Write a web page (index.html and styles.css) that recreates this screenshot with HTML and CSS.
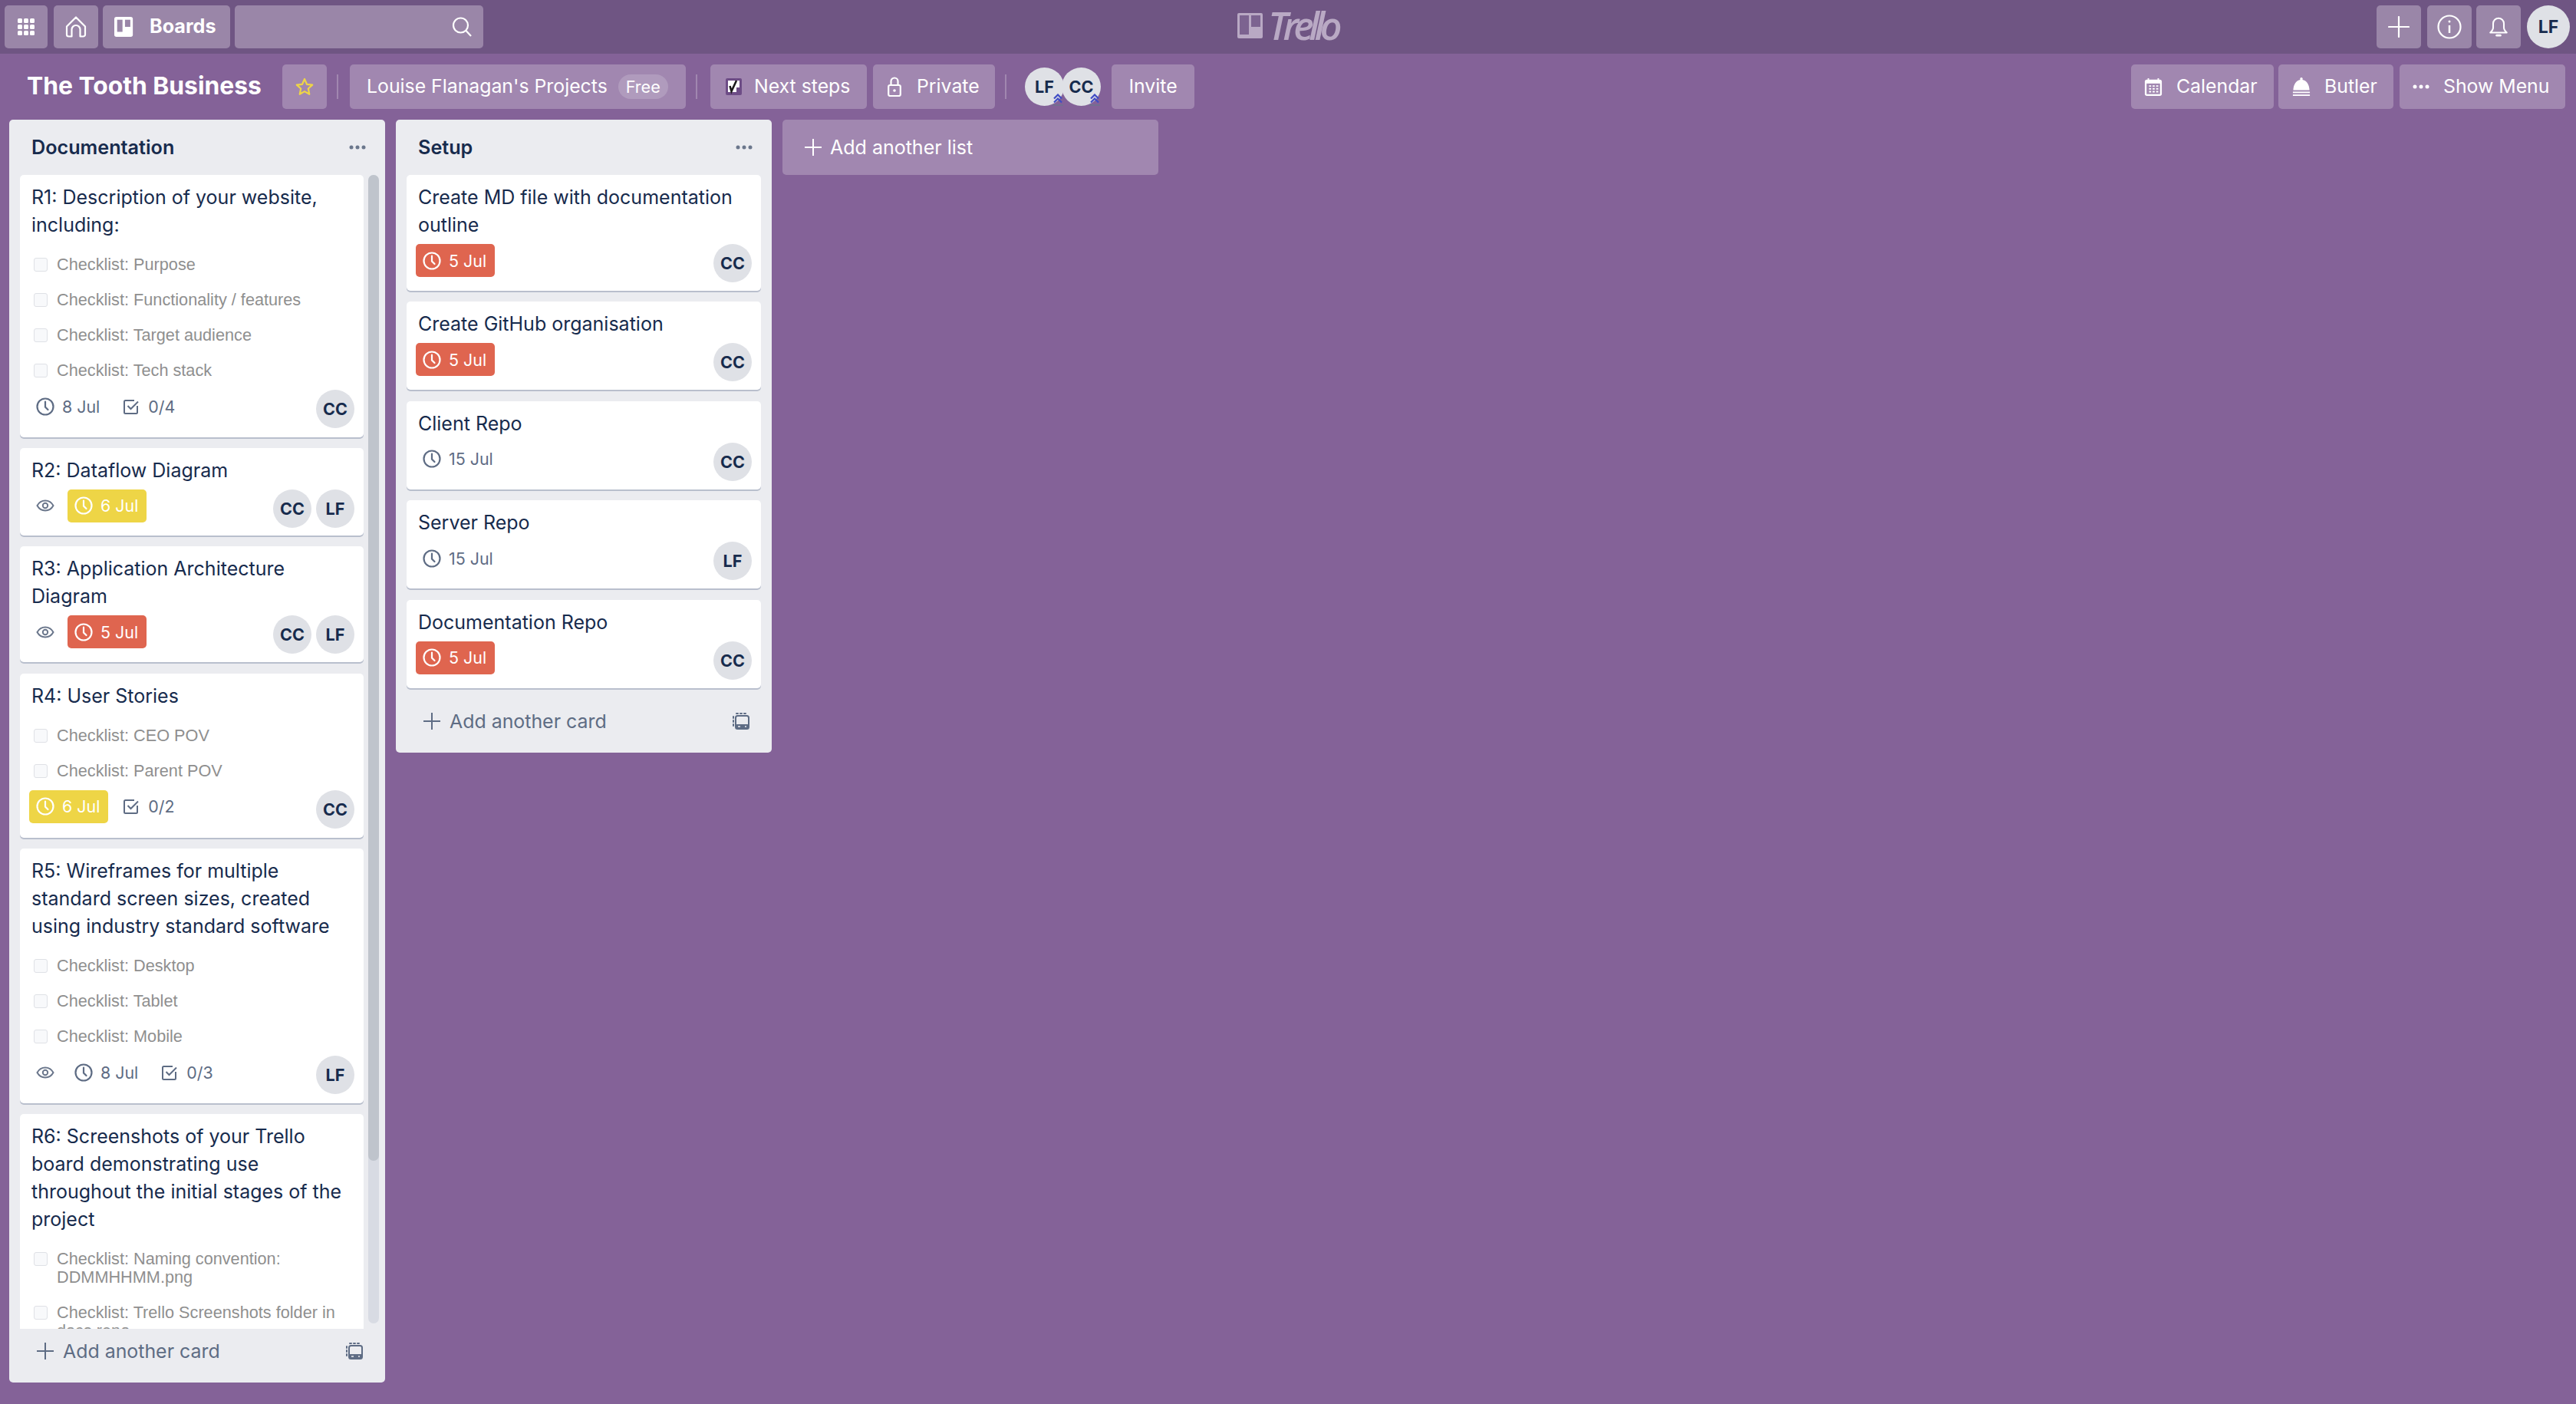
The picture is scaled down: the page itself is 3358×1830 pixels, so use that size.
FILE: index.html
```html
<!DOCTYPE html>
<html lang="en">
<head>
    <meta charset="UTF-8">
    <title>The Tooth Business | Trello</title>
    <link rel="stylesheet" href="styles.css">
</head>
<body>
    <svg class="sprite" width="0" height="0">
        <symbol id="clock" viewBox="0 0 24 24"><circle cx="12" cy="12" r="10.5" fill="none" stroke="currentColor" stroke-width="2.2"/><path d="M12 5.5V12.5L15.5 16" fill="none" stroke="currentColor" stroke-width="2.2" stroke-linecap="round"/></symbol>
        <symbol id="eye" viewBox="0 0 24 24"><path d="M1.5 12C4 7.5 7.5 5.5 12 5.5S20 7.5 22.5 12C20 16.500 16.500 18.500 12 18.500S4 16.500 1.500 12Z" fill="none" stroke="currentColor" stroke-width="2"/><circle cx="12" cy="12" r="3.200" fill="none" stroke="currentColor" stroke-width="2"/></symbol>
        <symbol id="check" viewBox="0 0 20 20"><path d="M18 9V17.500A1.500 1.500 0 0 1 16.500 19H2.500A1.500 1.500 0 0 1 1 17.500V3.500A1.500 1.500 0 0 1 2.500 2H14" fill="none" stroke="currentColor" stroke-width="2"/><path d="M5.500 9L9.500 13L19 3.500" fill="none" stroke="currentColor" stroke-width="2"/></symbol>
        <symbol id="plus" viewBox="0 0 22 22"><path d="M11 0V22M0 11H22" stroke="currentColor" stroke-width="2"/></symbol>
        <symbol id="template" viewBox="0 0 22 22"><path d="M1 5V7M1 10V12M1 15V17M5 1H7M10 1H12M15 1H17" stroke="currentColor" stroke-width="2" stroke-linecap="round"/><rect x="4" y="4" width="17" height="17" rx="2.500" fill="none" stroke="currentColor" stroke-width="2"/><rect x="4" y="15" width="17" height="6" rx="1.500" fill="currentColor"/><path d="M7 18H10M16 18H18" stroke="#ebecf0" stroke-width="1.600"/></symbol>
        <symbol id="chevrons" viewBox="0 0 16 16"><path d="M3 6.500L8 1.500L13 6.500M3 11.500L8 6.500L13 11.500" fill="none" stroke="#3f4bc4" stroke-width="2.200"/><path d="M1 15H15" stroke="#6f748f" stroke-width="1.600"/></symbol>
    </svg>

    <header class="topbar">
        <div class="topbar-left">
            <button class="nav-btn nav-grid">
                <svg class="icon-24" viewBox="0 0 24 24" fill="#fff"><rect x="1" y="1" width="6" height="6" rx="1.500"/><rect x="9" y="1" width="6" height="6" rx="1.500"/><rect x="17" y="1" width="6" height="6" rx="1.500"/><rect x="1" y="9" width="6" height="6" rx="1.500"/><rect x="9" y="9" width="6" height="6" rx="1.500"/><rect x="17" y="9" width="6" height="6" rx="1.500"/><rect x="1" y="17" width="6" height="6" rx="1.500"/><rect x="9" y="17" width="6" height="6" rx="1.500"/><rect x="17" y="17" width="6" height="6" rx="1.500"/></svg>
            </button>
            <button class="nav-btn nav-square nav-home">
                <svg class="icon-28" viewBox="0 0 28 28" fill="none" stroke="#fff" stroke-width="2.200"><path d="M14 1.500L2 13.500V24A2.500 2.500 0 0 0 4.500 26.500H8.500V17.500A5.500 5.500 0 0 1 19.500 17.500V26.500H23.500A2.500 2.500 0 0 0 26 24V13.500Z" stroke-linejoin="round"/></svg>
            </button>
            <button class="nav-btn nav-boards">
                <svg class="icon-boards" viewBox="0 0 28 28"><rect width="26" height="28" rx="3" fill="#fff"/><rect x="4" y="4" width="7.500" height="17" fill="#9a86a8"/><rect x="15" y="4" width="7.500" height="10" fill="#9a86a8"/></svg>
                <span>Boards</span>
            </button>
            <div class="search-box">
                <svg class="icon-28" viewBox="0 0 28 28" fill="none" stroke="#fff" stroke-width="2.200"><circle cx="12.500" cy="12" r="9.500"/><path d="M19.500 19L26 26"/></svg>
            </div>
        </div>
        <div class="logo">
            <svg class="logo-mark" viewBox="0 0 33 33"><rect width="33" height="33" rx="2" fill="#b9a9c4"/><rect x="3" y="3" width="12" height="25" fill="#7c6390"/><rect x="18" y="3" width="12" height="15" fill="#7c6390"/></svg>
            <span class="logo-text">Trello</span>
        </div>
        <div class="topbar-right">
            <button class="nav-btn nav-square nav-plus">
                <svg class="icon-28" viewBox="0 0 28 28" stroke="#fff" stroke-width="2.200"><path d="M14 1V27M1 14H27" stroke-linecap="round"/></svg>
            </button>
            <button class="nav-btn nav-square">
                <svg class="icon-32" viewBox="0 0 32 32" fill="none" stroke="#fff" stroke-width="2.200"><ellipse cx="16" cy="16" rx="14.500" ry="14.500"/><path d="M16 14V24" stroke-width="2.500"/><circle cx="16" cy="9" r="1.500" fill="#fff" stroke="none"/></svg>
            </button>
            <button class="nav-btn nav-square">
                <svg class="icon-28" viewBox="0 0 28 30" fill="none" stroke="#fff" stroke-width="2.200"><path d="M14 3A7.500 7.500 0 0 0 6.500 10.500V16C6.500 19 4.500 21 2.500 23H25.500C23.500 21 21.500 19 21.500 16V10.500A7.500 7.500 0 0 0 14 3Z" stroke-linejoin="round"/><path d="M11.500 27H16.500" stroke-width="3" stroke-linecap="round"/></svg>
            </button>
            <div class="avatar avatar-top">LF</div>
        </div>
    </header>

    <div class="boardbar">
        <h1 class="board-name">The Tooth Business</h1>
        <button class="bar-btn bar-star">
            <svg class="icon-24" viewBox="0 0 24 24" fill="none" stroke="#eed546" stroke-width="2.200"><path d="M12 2L15 8.800L22.200 9.600L16.800 14.500L18.300 21.800L12 18.100L5.700 21.800L7.200 14.500L1.800 9.600L9 8.800Z" stroke-linejoin="round"/></svg>
        </button>
        <span class="bar-divider"></span>
        <button class="bar-btn bar-team">Louise Flanagan's Projects <span class="free-pill">Free</span></button>
        <span class="bar-divider"></span>
        <button class="bar-btn bar-steps">
            <svg class="icon-steps" viewBox="0 0 21 22"><rect width="21" height="22" rx="2" fill="#6d4c86"/><rect x="3" y="3" width="11" height="15" fill="#fff"/><rect x="14" y="3" width="4" height="9" fill="#fff"/><path d="M5.500 10L7.500 17L14 3" fill="none" stroke="#1b1b1b" stroke-width="2.600"/></svg>
            Next steps
        </button>
        <button class="bar-btn bar-private">
            <svg class="icon-lock" viewBox="0 0 18 26" fill="none" stroke="#fff" stroke-width="2.200"><rect x="1.200" y="11" width="15.600" height="14" rx="2"/><path d="M4.500 11V6A4.500 4.500 0 0 1 13.500 6V11"/><circle cx="9" cy="18" r="1.800" fill="#fff" stroke="none"/></svg>
            Private
        </button>
        <span class="bar-divider"></span>
        <div class="members">
            <div class="avatar avatar-bar">LF<svg class="admin-mark"><use href="#chevrons"/></svg></div>
            <div class="avatar avatar-bar avatar-overlap">CC<svg class="admin-mark"><use href="#chevrons"/></svg></div>
        </div>
        <button class="bar-btn bar-invite">Invite</button>

        <div class="bar-right">
            <button class="bar-btn bar-calendar">
                <svg class="icon-24" viewBox="0 0 24 26"><path d="M5 1V5M19 1V5" stroke="#fff" stroke-width="2"/><rect y="3" width="24" height="23" rx="3" fill="#fff"/><rect x="2.500" y="8.500" width="19" height="15" fill="#a187b0"/><path d="M6 12H9M11 12H14M16 12H19M6 16H9M11 16H14M16 16H19M6 20H9M11 20H14M16 20H19" stroke="#fff" stroke-width="2"/></svg>
                Calendar
            </button>
            <button class="bar-btn bar-butler">
                <svg class="icon-24" viewBox="0 0 24 26" fill="#fff"><path d="M12 0A2 2 0 0 1 13.500 3.200C19 4 23 9 23.500 18H.5C1 9 5 4 10.500 3.200A2 2 0 0 1 12 0Z"/><rect y="20" width="24" height="2"/><rect y="24" width="24" height="2"/></svg>
                Butler
            </button>
            <button class="bar-btn bar-menu">
                <svg class="icon-dots" viewBox="0 0 22 6" fill="#fff"><circle cx="3" cy="3" r="2.500"/><circle cx="11" cy="3" r="2.500"/><circle cx="19" cy="3" r="2.500"/></svg>
                Show Menu
            </button>
        </div>
    </div>

    <main class="board">
        <section class="list">
            <div class="list-head">
                <h2>Documentation</h2>
                <svg class="list-dots" viewBox="0 0 22 6"><circle cx="3" cy="3" r="2.500"/><circle cx="11" cy="3" r="2.500"/><circle cx="19" cy="3" r="2.500"/></svg>
            </div>
            <div class="list-scroll">
                <div class="cards cards-clipped">
                    <article class="card card-r1">
                        <p class="card-title">R1: Description of your website, including:</p>
                        <ul class="checklist">
                            <li><span class="box"></span>Checklist: Purpose</li>
                            <li><span class="box"></span>Checklist: Functionality / features</li>
                            <li><span class="box"></span>Checklist: Target audience</li>
                            <li><span class="box"></span>Checklist: Tech stack</li>
                        </ul>
                        <div class="card-foot">
                            <div class="badges">
                                <span class="badge"><svg class="icon-24"><use href="#clock"/></svg>8 Jul</span>
                                <span class="badge badge-check"><svg class="icon-20"><use href="#check"/></svg>0/4</span>
                            </div>
                            <div class="avatars"><div class="avatar">CC</div></div>
                        </div>
                    </article>
                    <article class="card card-tight">
                        <p class="card-title">R2: Dataflow Diagram</p>
                        <div class="card-foot">
                            <div class="badges">
                                <span class="badge badge-eye"><svg class="icon-24"><use href="#eye"/></svg></span>
                                <span class="badge badge-soon"><svg class="icon-24"><use href="#clock"/></svg>6 Jul</span>
                            </div>
                            <div class="avatars"><div class="avatar">CC</div><div class="avatar">LF</div></div>
                        </div>
                    </article>
                    <article class="card">
                        <p class="card-title">R3: Application Architecture Diagram</p>
                        <div class="card-foot">
                            <div class="badges">
                                <span class="badge badge-eye"><svg class="icon-24"><use href="#eye"/></svg></span>
                                <span class="badge badge-late"><svg class="icon-24"><use href="#clock"/></svg>5 Jul</span>
                            </div>
                            <div class="avatars"><div class="avatar">CC</div><div class="avatar">LF</div></div>
                        </div>
                    </article>
                    <article class="card">
                        <p class="card-title">R4: User Stories</p>
                        <ul class="checklist">
                            <li><span class="box"></span>Checklist: CEO POV</li>
                            <li><span class="box"></span>Checklist: Parent POV</li>
                        </ul>
                        <div class="card-foot">
                            <div class="badges">
                                <span class="badge badge-soon"><svg class="icon-24"><use href="#clock"/></svg>6 Jul</span>
                                <span class="badge badge-check"><svg class="icon-20"><use href="#check"/></svg>0/2</span>
                            </div>
                            <div class="avatars"><div class="avatar">CC</div></div>
                        </div>
                    </article>
                    <article class="card">
                        <p class="card-title">R5: Wireframes for multiple standard screen sizes, created using industry standard software</p>
                        <ul class="checklist">
                            <li><span class="box"></span>Checklist: Desktop</li>
                            <li><span class="box"></span>Checklist: Tablet</li>
                            <li><span class="box"></span>Checklist: Mobile</li>
                        </ul>
                        <div class="card-foot">
                            <div class="badges">
                                <span class="badge badge-eye"><svg class="icon-24"><use href="#eye"/></svg></span>
                                <span class="badge"><svg class="icon-24"><use href="#clock"/></svg>8 Jul</span>
                                <span class="badge badge-check"><svg class="icon-20"><use href="#check"/></svg>0/3</span>
                            </div>
                            <div class="avatars"><div class="avatar">LF</div></div>
                        </div>
                    </article>
                    <article class="card">
                        <p class="card-title">R6: Screenshots of your Trello board demonstrating use throughout the initial stages of the project</p>
                        <ul class="checklist">
                            <li><span class="box"></span>Checklist: Naming convention: DDMMHHMM.png</li>
                            <li><span class="box"></span>Checklist: Trello Screenshots folder in docs repo</li>
                        </ul>
                    </article>
                </div>
                <div class="scrollbar"><div class="scroll-thumb"></div></div>
            </div>
            <div class="list-foot">
                <svg class="icon-22"><use href="#plus"/></svg>
                <span class="add-card">Add another card</span>
                <svg class="icon-22 foot-template"><use href="#template"/></svg>
            </div>
        </section>

        <section class="list">
            <div class="list-head">
                <h2>Setup</h2>
                <svg class="list-dots" viewBox="0 0 22 6"><circle cx="3" cy="3" r="2.500"/><circle cx="11" cy="3" r="2.500"/><circle cx="19" cy="3" r="2.500"/></svg>
            </div>
            <div class="cards cards-full">
                <article class="card">
                    <p class="card-title">Create MD file with documentation outline</p>
                    <div class="card-foot">
                        <div class="badges"><span class="badge badge-late"><svg class="icon-24"><use href="#clock"/></svg>5 Jul</span></div>
                        <div class="avatars"><div class="avatar">CC</div></div>
                    </div>
                </article>
                <article class="card">
                    <p class="card-title">Create GitHub organisation</p>
                    <div class="card-foot">
                        <div class="badges"><span class="badge badge-late"><svg class="icon-24"><use href="#clock"/></svg>5 Jul</span></div>
                        <div class="avatars"><div class="avatar">CC</div></div>
                    </div>
                </article>
                <article class="card">
                    <p class="card-title">Client Repo</p>
                    <div class="card-foot">
                        <div class="badges"><span class="badge"><svg class="icon-24"><use href="#clock"/></svg>15 Jul</span></div>
                        <div class="avatars"><div class="avatar">CC</div></div>
                    </div>
                </article>
                <article class="card">
                    <p class="card-title">Server Repo</p>
                    <div class="card-foot">
                        <div class="badges"><span class="badge"><svg class="icon-24"><use href="#clock"/></svg>15 Jul</span></div>
                        <div class="avatars"><div class="avatar">LF</div></div>
                    </div>
                </article>
                <article class="card">
                    <p class="card-title">Documentation Repo</p>
                    <div class="card-foot">
                        <div class="badges"><span class="badge badge-late"><svg class="icon-24"><use href="#clock"/></svg>5 Jul</span></div>
                        <div class="avatars"><div class="avatar">CC</div></div>
                    </div>
                </article>
            </div>
            <div class="list-foot">
                <svg class="icon-22"><use href="#plus"/></svg>
                <span class="add-card">Add another card</span>
                <svg class="icon-22 foot-template"><use href="#template"/></svg>
            </div>
        </section>

        <button class="add-list">
            <svg class="icon-22"><use href="#plus"/></svg>
            Add another list
        </button>
    </main>
</body>
</html>
```

FILE: styles.css
```css
* {
    box-sizing: border-box;
}
html, body {
    height: 100%;
}
body {
    margin: 0;
    overflow: hidden;
    background-color: #846298;
    font-family: Inter, "Liberation Sans", sans-serif;
    color: #172b4d;
}
button {
    border: none;
    color: #fff;
    font-family: inherit;
    cursor: pointer;
}
svg {
    display: block;
    flex-shrink: 0;
}
.sprite {
    position: absolute;
}
.icon-20 { width: 20px; height: 20px; }
.icon-22 { width: 22px; height: 22px; }
.icon-24 { width: 24px; height: 24px; }
.icon-28 { width: 28px; height: 28px; }
.icon-32 { width: 32px; height: 32px; }

/* top bar */
.topbar {
    display: flex;
    align-items: center;
    height: 70px;
    padding: 0 8px 0 6px;
    background-color: #6f5583;
}
.topbar-left, .topbar-right {
    flex: 1;
    display: flex;
    align-items: center;
}
.topbar-right {
    justify-content: flex-end;
    gap: 6px;
}
.nav-btn {
    display: flex;
    align-items: center;
    justify-content: center;
    height: 56px;
    padding: 0;
    background-color: #9a86a8;
    border-radius: 5px;
}
.nav-grid {
    width: 56px;
}
.nav-square {
    width: 58px;
}
.nav-home {
    margin-left: 8px;
}
.nav-plus {
    margin-right: 2px;
}
.nav-boards {
    width: 166px;
    margin-left: 6px;
    gap: 20px;
    padding: 0 15px 2px;
    justify-content: flex-start;
    font-size: 25.2px;
    font-weight: 700;
}
.nav-boards svg {
    margin-top: 2px;
}
.icon-boards {
    width: 26px;
    height: 28px;
}
.search-box {
    display: flex;
    align-items: center;
    justify-content: flex-end;
    width: 324px;
    height: 56px;
    margin-left: 6px;
    padding-right: 14px;
    background-color: #9a86a8;
    border-radius: 5px;
}
.logo {
    display: flex;
    align-items: center;
    gap: 7px;
    margin-bottom: 4px;
}
.logo-mark {
    width: 33px;
    height: 33px;
}
.logo-text {
    font-family: "Open Sans", sans-serif;
    font-size: 50px;
    font-style: italic;
    font-weight: 600;
    line-height: 46px;
    letter-spacing: -6.5px;
    color: #b9a9c4;
}

/* avatars */
.avatar {
    position: relative;
    display: flex;
    align-items: center;
    justify-content: center;
    width: 50px;
    height: 50px;
    background-color: #dfe1e6;
    border-radius: 50%;
    font-size: 21.6px;
    font-weight: 700;
    color: #172b4d;
}
.avatar-top {
    width: 56px;
    height: 56px;
    margin-left: 2px;
    font-size: 23px;
}
.avatar-bar {
    width: 51px;
}
.avatar-overlap {
    margin-left: -3px;
}
.admin-mark {
    position: absolute;
    right: 0;
    bottom: 0;
    width: 16px;
    height: 16px;
}

/* board bar */
.boardbar {
    display: flex;
    align-items: center;
    height: 58px;
    margin-top: 14px;
    padding: 0 14px 0 35px;
}
.board-name {
    width: 333px;
    margin: 0;
    padding-bottom: 3px;
    font-size: 31.8px;
    font-weight: 700;
    color: #fff;
    white-space: nowrap;
}
.bar-btn {
    display: flex;
    align-items: center;
    height: 58px;
    padding: 0 0 3px;
    background-color: #a187b0;
    border-radius: 5px;
    font-size: 24.8px;
    white-space: nowrap;
}
.bar-btn svg {
    margin-top: 3px;
}
.bar-star {
    justify-content: center;
    width: 58px;
}
.bar-divider {
    width: 2px;
    height: 32px;
    margin: 0 15px 0 13px;
    background-color: #a187b0;
}
.bar-team {
    width: 438px;
    padding-left: 22px;
}
.free-pill {
    display: block;
    margin: 3px 0 0 14px;
    padding: 0 10px;
    height: 32px;
    line-height: 32px;
    background-color: #b09bbd;
    border-radius: 16px;
    font-size: 21.6px;
}
.bar-steps {
    width: 204px;
    margin-left: 2px;
    padding-left: 20px;
    gap: 16px;
}
.icon-steps {
    width: 21px;
    height: 22px;
}
.bar-private {
    width: 159px;
    margin-left: 8px;
    padding-left: 19px;
    gap: 20px;
}
.icon-lock {
    width: 18px;
    height: 26px;
}
.members {
    display: flex;
    margin-left: 9px;
    margin-right: 14px;
}
.bar-invite {
    width: 108px;
    justify-content: center;
}
.bar-right {
    display: flex;
    gap: 6px;
    margin-left: auto;
}
.bar-calendar {
    width: 186px;
    padding-left: 17px;
    gap: 18px;
}
.bar-butler {
    width: 150px;
    padding-left: 18px;
    gap: 18px;
}
.bar-menu {
    width: 216px;
    margin-left: 2px;
    padding-left: 17px;
    gap: 18px;
}
.icon-dots {
    width: 22px;
    height: 6px;
}

/* lists */
.board {
    display: flex;
    align-items: flex-start;
    gap: 14px;
    padding: 14px 12px 0;
}
.list {
    width: 490px;
    background-color: #ebecf0;
    border-radius: 5px;
}
.list-head {
    display: flex;
    align-items: center;
    justify-content: space-between;
    height: 72px;
    padding: 0 25px 0 29px;
}
.list-head h2 {
    margin: 0;
    font-size: 25.2px;
    font-weight: 600;
}
.list-dots {
    width: 22px;
    height: 6px;
    fill: #6b778c;
}
.list-scroll {
    display: flex;
    height: 1504px;
    padding-left: 14px;
}
.cards {
    display: flex;
    flex-direction: column;
    gap: 14.4px;
}
.cards-clipped {
    width: 448px;
    overflow: hidden;
}
.cards-full {
    padding: 0 14px 14px;
}
.scrollbar {
    width: 14px;
    margin-left: 6px;
    height: 1497px;
    background-color: #d8dbe3;
    border-radius: 7px;
}
.scroll-thumb {
    height: 1285px;
    background-color: #bfc4cc;
    border-radius: 7px;
}
.list-foot {
    display: flex;
    align-items: center;
    height: 70px;
    padding: 0 29px 12px 36px;
    color: #5e6c84;
}
.add-card {
    margin-left: 12px;
    font-size: 24.9px;
}
.foot-template {
    margin-left: auto;
}
.add-list {
    display: flex;
    align-items: center;
    gap: 11px;
    width: 490px;
    height: 72px;
    padding: 0 29px;
    background-color: #a187b0;
    border-radius: 5px;
    font-size: 25px;
}

/* cards */
.card {
    flex-shrink: 0;
    padding: 11px 12px;
    background-color: #fff;
    border-radius: 5px;
    box-shadow: 0 2px 0 #b9bfcd;
}
.card-r1 {
    margin-bottom: -.5px;
}
.card-tight {
    padding-bottom: 10px;
}
.card-title {
    margin: 0 0 7px;
    padding-left: 3px;
    font-size: 25px;
    line-height: 36px;
}
.checklist {
    margin: 11px 0 2px;
    padding: 0 0 0 6px;
    list-style: none;
}
.checklist li {
    display: flex;
    padding: 11px 0;
    font-family: "Liberation Sans", sans-serif;
    font-size: 21.7px;
    line-height: 24px;
    color: #8f8f8f;
}
.box {
    flex-shrink: 0;
    width: 18px;
    height: 18px;
    margin: 3px 12px 0 0;
    background-color: #f8f9fb;
    border: 1px solid #dfe1e6;
    border-radius: 3px;
}
.card-foot {
    display: flex;
    align-items: flex-start;
    justify-content: space-between;
}
.checklist + .card-foot {
    margin-bottom: 1px;
}
.badges {
    display: flex;
    gap: 8px;
}
.badge {
    display: flex;
    align-items: center;
    gap: 10px;
    height: 43px;
    padding: 0 11px 0 9px;
    border-radius: 5px;
    font-size: 21.4px;
    color: #5e6c84;
}
.badge-eye {
    padding-right: 9px;
    color: #6b778c;
}
.badge-check {
    gap: 12px;
    padding-left: 12px;
}
.badge-soon {
    background-color: #eed546;
    color: #fff;
}
.badge-late {
    background-color: #df654f;
    color: #fff;
}
.avatars {
    display: flex;
    gap: 6px;
}
```
